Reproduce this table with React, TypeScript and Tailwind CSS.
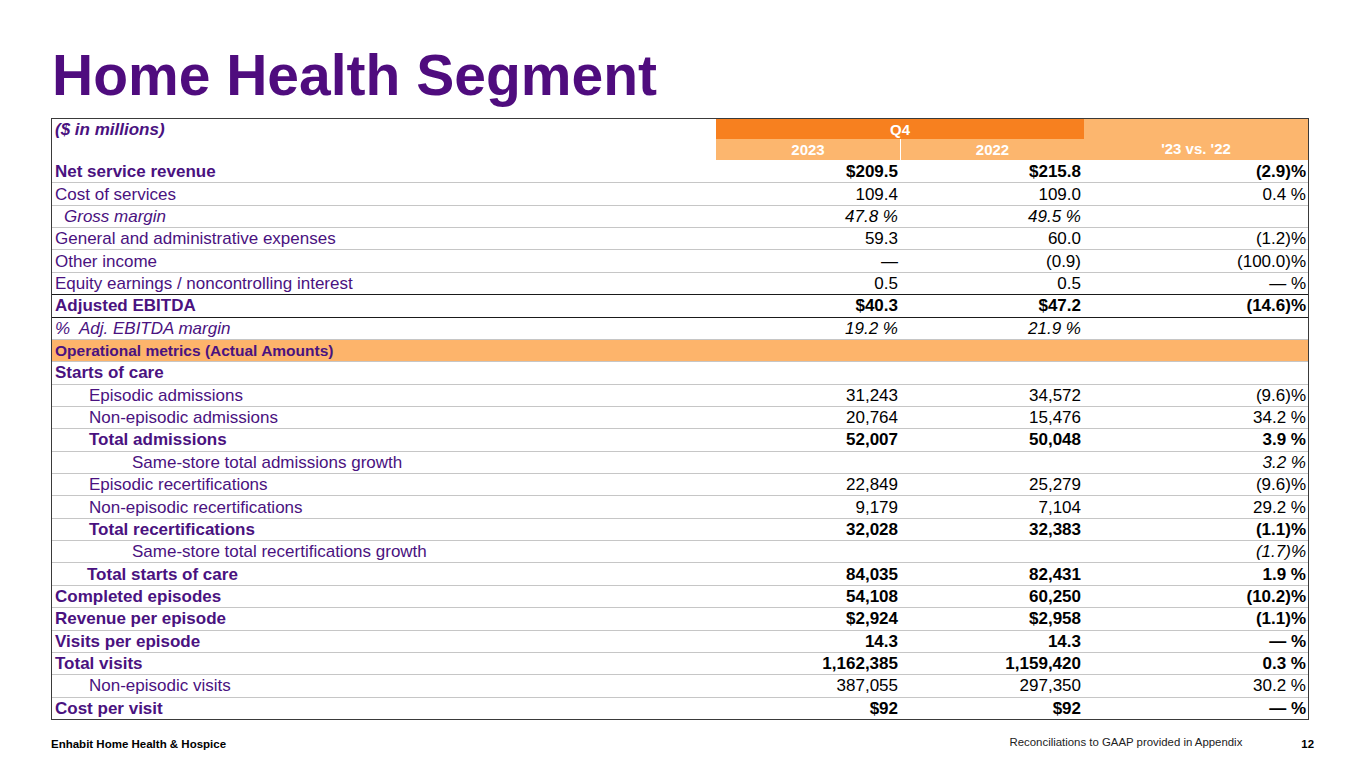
type Row = {
  label: string;
  a?: string;
  b?: string;
  c?: string;
  kind?: "bold" | "italic" | "normal" | "section";
  indent?: number;
  valItalic?: boolean;
  darkTop?: boolean;
};

const rows: Row[] = [
  { label: "Net service revenue", a: "$209.5", b: "$215.8", c: "(2.9)%", kind: "bold" },
  { label: "Cost of services", a: "109.4", b: "109.0", c: "0.4 %" },
  { label: "Gross margin", a: "47.8 %", b: "49.5 %", kind: "italic", indent: 9, valItalic: true },
  { label: "General and administrative expenses", a: "59.3", b: "60.0", c: "(1.2)%" },
  { label: "Other income", a: "—", b: "(0.9)", c: "(100.0)%" },
  { label: "Equity earnings / noncontrolling interest", a: "0.5", b: "0.5", c: "— %" },
  { label: "Adjusted EBITDA", a: "$40.3", b: "$47.2", c: "(14.6)%", kind: "bold", darkTop: true },
  { label: "%  Adj. EBITDA margin", a: "19.2 %", b: "21.9 %", kind: "italic", valItalic: true, darkTop: true },
  { label: "Operational metrics (Actual Amounts)", kind: "section" },
  { label: "Starts of care", kind: "bold" },
  { label: "Episodic admissions", a: "31,243", b: "34,572", c: "(9.6)%", indent: 34 },
  { label: "Non-episodic admissions", a: "20,764", b: "15,476", c: "34.2 %", indent: 34 },
  { label: "Total admissions", a: "52,007", b: "50,048", c: "3.9 %", kind: "bold", indent: 34 },
  { label: "Same-store total admissions growth", c: "3.2 %", indent: 77, valItalic: true },
  { label: "Episodic recertifications", a: "22,849", b: "25,279", c: "(9.6)%", indent: 34 },
  { label: "Non-episodic recertifications", a: "9,179", b: "7,104", c: "29.2 %", indent: 34 },
  { label: "Total recertifications", a: "32,028", b: "32,383", c: "(1.1)%", kind: "bold", indent: 34 },
  { label: "Same-store total recertifications growth", c: "(1.7)%", indent: 77, valItalic: true },
  { label: "Total starts of care", a: "84,035", b: "82,431", c: "1.9 %", kind: "bold", indent: 32 },
  { label: "Completed episodes", a: "54,108", b: "60,250", c: "(10.2)%", kind: "bold" },
  { label: "Revenue per episode", a: "$2,924", b: "$2,958", c: "(1.1)%", kind: "bold" },
  { label: "Visits per episode", a: "14.3", b: "14.3", c: "— %", kind: "bold" },
  { label: "Total visits", a: "1,162,385", b: "1,159,420", c: "0.3 %", kind: "bold" },
  { label: "Non-episodic visits", a: "387,055", b: "297,350", c: "30.2 %", indent: 34 },
  { label: "Cost per visit", a: "$92", b: "$92", c: "— %", kind: "bold" },
];

function TableRow({ row, first }: { row: Row; first: boolean }) {
  const bold = row.kind === "bold";
  const italic = row.kind === "italic";
  const section = row.kind === "section";
  const border = first
    ? "border-t border-t-transparent"
    : row.darkTop
    ? "border-t border-t-[#1a1a1a]"
    : "border-t border-t-[#c6c6c6]";
  const val = `flex items-center justify-end ${bold ? "font-bold" : ""} ${
    row.valItalic ? "italic" : ""
  }`;

  return (
    <div
      className={`grid h-[22.36px] grid-cols-[664px_185px_183px_1fr] text-[17px] leading-none ${border} ${
        section ? "bg-[#fdb46b]" : ""
      }`}
    >
      <div
        className={`flex items-center whitespace-pre pl-[3px] text-[#4a1280] ${
          bold ? "font-bold" : ""
        } ${italic ? "italic" : ""} ${section ? "text-[15.5px] font-bold" : ""}`}
      >
        <span style={{ marginLeft: row.indent ?? 0 }}>{row.label}</span>
      </div>
      <div className={`${val} pr-[3px] text-black`}>{row.a}</div>
      <div className={`${val} pr-[3px] text-black`}>{row.b}</div>
      <div className={`${val} whitespace-pre pr-[2px] text-black`}>{row.c}</div>
    </div>
  );
}

export default function App() {
  return (
    <div className="relative h-[768px] w-[1365px] overflow-hidden bg-white font-['Liberation_Sans',Arial,sans-serif]">
      <h1 className="pl-[52px] pt-[47px] text-[57px] font-bold leading-none text-[#4f0c7e]">
        Home Health Segment
      </h1>

      <div className="ml-[51px] mt-[14px] w-[1258px] border border-[#3a3a3a]">
        {/* header */}
        <div className="grid grid-cols-[664px_185px_183px_1fr]">
          <div className="row-span-2 pl-[3px] pt-[2px] text-[17px] font-bold italic leading-none text-[#4a1280]">
            ($ in millions)
          </div>
          <div className="col-span-2 flex h-[20px] items-center justify-center bg-[#f7801f] text-[15px] font-bold leading-none text-white">
            Q4
          </div>
          <div className="row-span-2 flex items-end justify-center bg-[#fcb66e] pb-[4px] text-[15px] font-bold leading-none text-white">
            '23 vs. '22
          </div>
          <div className="flex h-[21px] items-center justify-center border-r border-r-white bg-[#fcb66e] text-[15px] font-bold leading-none text-white">
            2023
          </div>
          <div className="flex h-[21px] items-center justify-center bg-[#fcb66e] text-[15px] font-bold leading-none text-white">
            2022
          </div>
        </div>

        {rows.map((row, i) => (
          <TableRow key={row.label} row={row} first={i === 0} />
        ))}
      </div>

      <div className="flex items-start px-[51px] pt-[14px] text-[11.4px]">
        <div className="mt-[2px] text-[11.5px] font-bold text-black">Enhabit Home Health &amp; Hospice</div>
        <div className="ml-auto mr-[-4px] text-[#222]">Reconciliations to GAAP provided in Appendix</div>
        <div className="ml-[63px] mt-[2px] font-bold text-black">12</div>
      </div>
    </div>
  );
}
